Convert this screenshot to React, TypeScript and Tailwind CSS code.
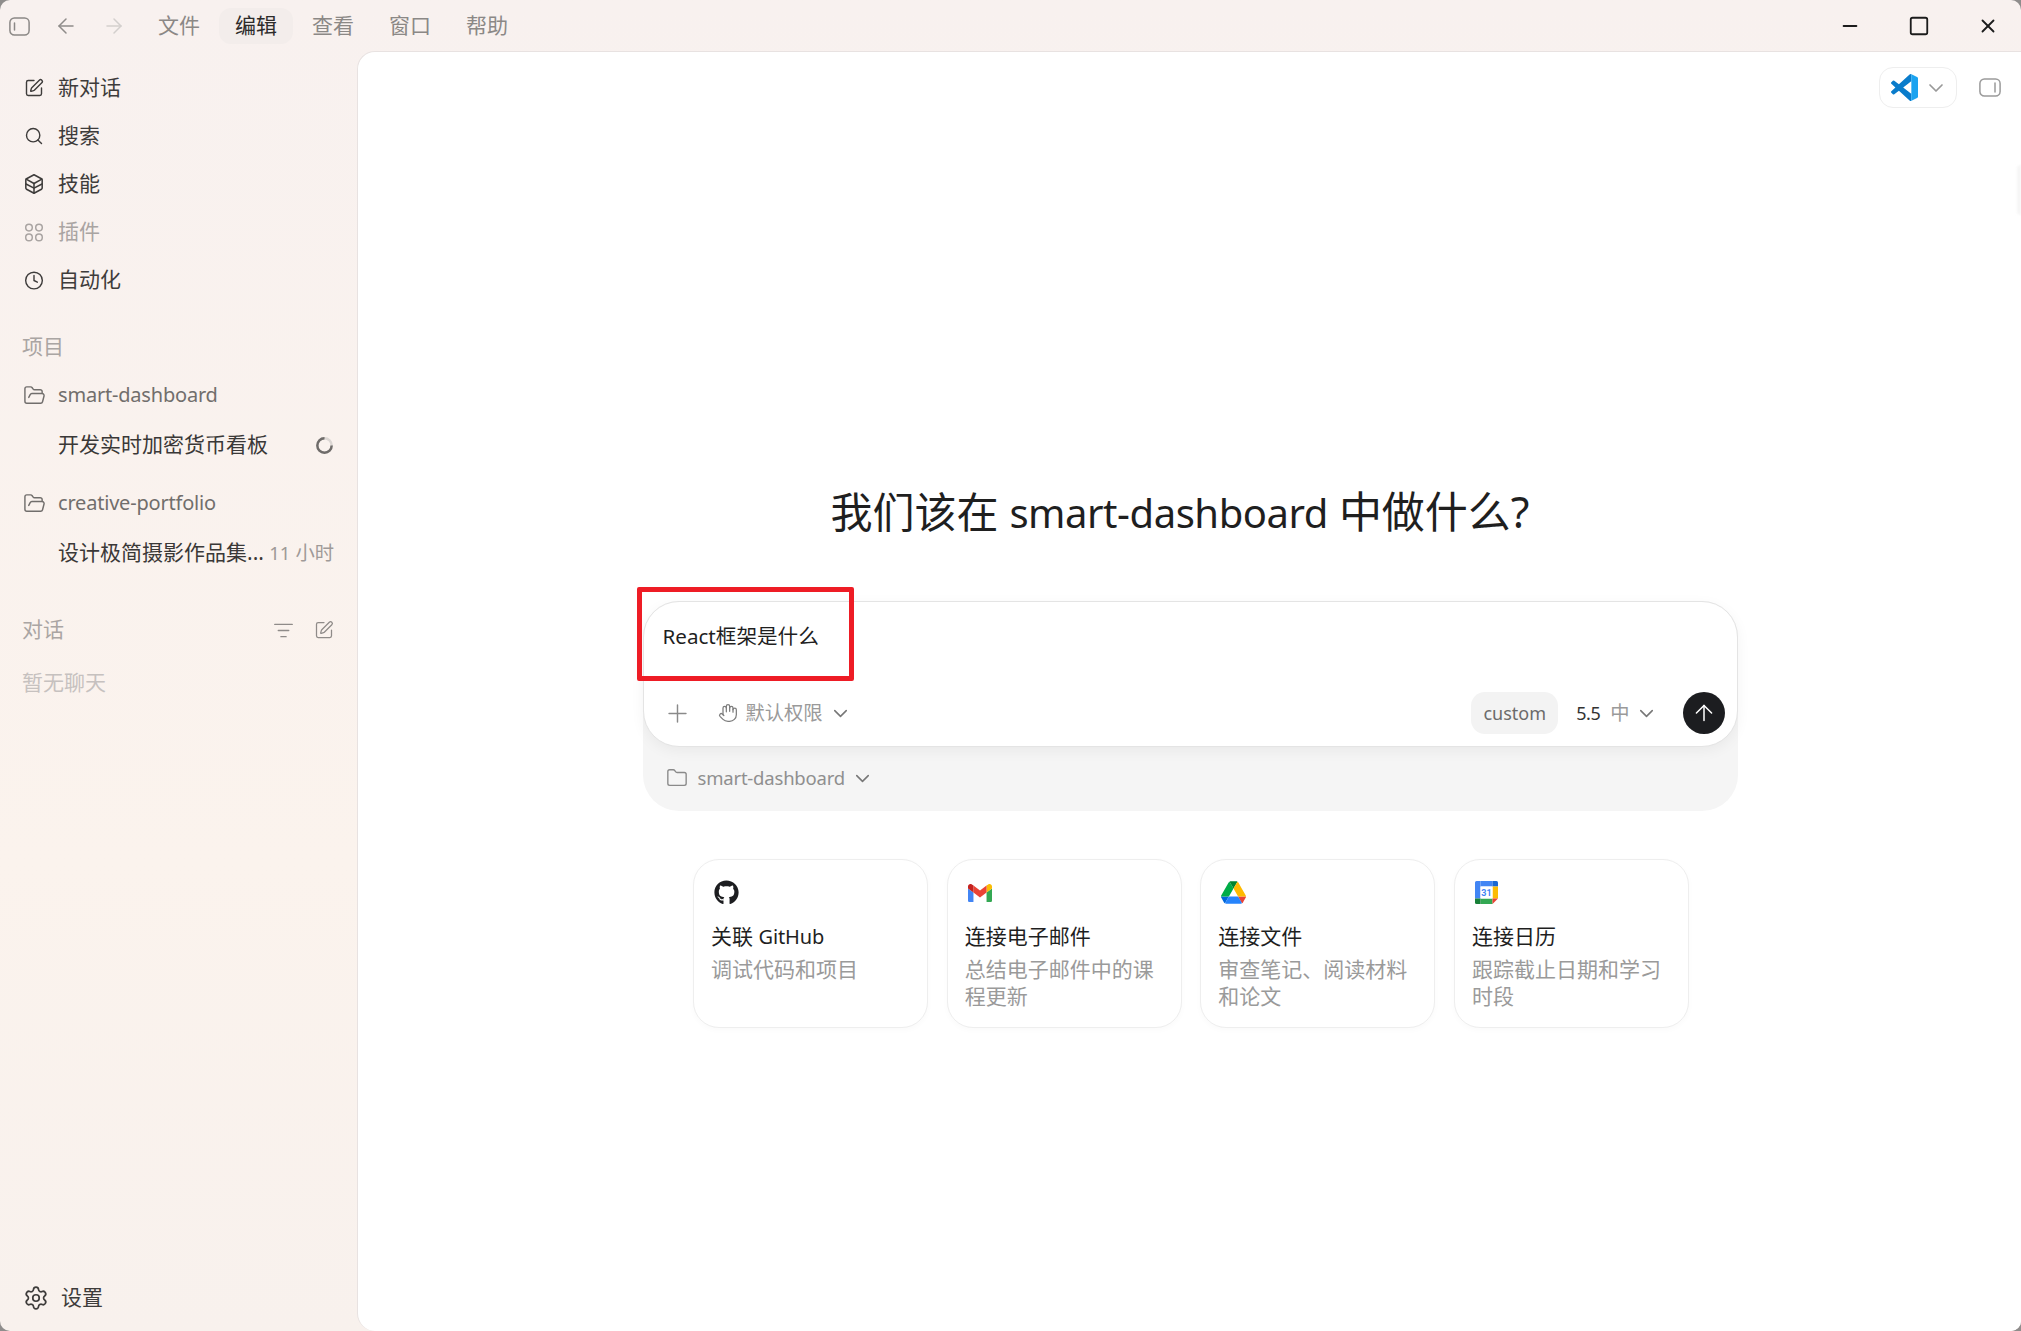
import { ArrowLeft, ArrowRight, ArrowUp, ChevronDown, Clock, Folder, FolderOpen, Hand, ListFilter, Minus, Plus, Search, Settings, Square, SquarePen, X } from "lucide-react";
import { FaGithub } from "react-icons/fa";
import type { ReactNode } from "react";

function SkillsIcon() {
  return (
    <svg width="22" height="24" viewBox="0 0 22 24" fill="none" stroke="currentColor" strokeWidth="1.7" strokeLinejoin="round" strokeLinecap="round">
      <path d="M11 1.8 19.2 6.2a1.5 1.5 0 0 1 .8 1.3v9a1.5 1.5 0 0 1-.8 1.3L11 22.2 2.8 17.8a1.5 1.5 0 0 1-.8-1.3v-9a1.5 1.5 0 0 1 .8-1.3Z" />
      <path d="M2.4 6.6 11 11.4 19.6 6.6" />
      <path d="M11 11.4v10.6" />
      <path d="M2.2 12 11 16.6 19.8 12" />
    </svg>
  );
}

function PluginsIcon() {
  return (
    <svg width="20" height="19" viewBox="0 0 20 19" fill="none" stroke="currentColor" strokeWidth="1.5">
      <circle cx="5" cy="4.6" r="3.3" />
      <circle cx="15" cy="4.6" r="3.3" />
      <circle cx="5" cy="14.4" r="3.3" />
      <circle cx="15" cy="14.4" r="3.3" />
    </svg>
  );
}

function Spinner() {
  return (
    <svg width="19" height="19" viewBox="0 0 18 18" fill="none" strokeWidth="2.3">
      <circle cx="9" cy="9" r="6.8" stroke="#dcd7d4" />
      <path d="M9 2.2A6.8 6.8 0 1 0 15.8 9" stroke="#6f6c6a" />
    </svg>
  );
}

function LeftToggle() {
  return (
    <svg width="21" height="19" viewBox="0 0 21 19" fill="none" stroke="currentColor" strokeWidth="1.5" strokeLinecap="round">
      <rect x="0.9" y="0.9" width="19.2" height="17.2" rx="4.5" />
      <path d="M5.5 6v7" />
    </svg>
  );
}

function RightToggle() {
  return (
    <svg width="22" height="19" viewBox="0 0 22 19" fill="none" stroke="currentColor" strokeWidth="1.5" strokeLinecap="round">
      <rect x="0.9" y="0.9" width="20.2" height="17.2" rx="4.5" />
      <path d="M16 5v9" />
    </svg>
  );
}

function VSCodeIcon() {
  const d = "M23.15 2.587L18.21.21a1.494 1.494 0 0 0-1.705.29l-9.46 8.63-4.12-3.128a.999.999 0 0 0-1.276.057L.327 7.261A1 1 0 0 0 .326 8.74L3.899 12 .326 15.26a1 1 0 0 0 .001 1.479L1.65 17.94a.999.999 0 0 0 1.276.057l4.12-3.128 9.46 8.63a1.492 1.492 0 0 0 1.704.29l4.942-2.377A1.5 1.5 0 0 0 24 20.06V3.939a1.5 1.5 0 0 0-.85-1.352zm-5.146 14.861L10.826 12l7.178-5.448v10.896z";
  return (
    <svg width="27" height="27" viewBox="0 0 24 24">
      <clipPath id="vsr"><rect x="18" y="0" width="6" height="24" /></clipPath>
      <clipPath id="vsl"><rect x="0" y="0" width="18" height="24" /></clipPath>
      <path d={d} fill="#0a7ccb" clipPath="url(#vsl)" />
      <path d={d} fill="#1ba3f0" clipPath="url(#vsr)" />
    </svg>
  );
}

function GmailIcon() {
  return (
    <svg width="24" height="24" viewBox="0 0 24 24">
      <path d="M1.6 21H5.45V11.6L0 7.5V19.4C0 20.3.7 21 1.6 21Z" fill="#4285F4" />
      <path d="M18.55 21H22.4C23.3 21 24 20.3 24 19.4V7.5L18.55 11.6Z" fill="#34A853" />
      <path d="M18.55 4.5V11.6L24 7.5V5.4C24 3.4 21.7 2.3 20.2 3.5Z" fill="#FBBC04" />
      <path d="M5.45 11.6V4.5L12 9.4L18.55 4.5V11.6L12 16.5Z" fill="#EA4335" />
      <path d="M0 5.4V7.5L5.45 11.6V4.5L3.9 3.5C2.3 2.3 0 3.4 0 5.4Z" fill="#C5221F" />
    </svg>
  );
}

function DriveIcon() {
  return (
    <svg width="25" height="23" viewBox="0 0 87.3 78">
      <path d="m6.6 66.85 3.85 6.65c.8 1.4 1.95 2.5 3.3 3.3l13.75-23.8h-27.5c0 1.55.4 3.1 1.2 4.5z" fill="#0066da" />
      <path d="m43.65 25-13.75-23.8c-1.35.8-2.5 1.9-3.3 3.3l-25.4 44a9.06 9.06 0 0 0 -1.2 4.5h27.5z" fill="#00ac47" />
      <path d="m73.55 76.8c1.35-.8 2.5-1.9 3.3-3.3l1.6-2.75 7.65-13.25c.8-1.4 1.2-2.95 1.2-4.5h-27.502l5.852 11.5z" fill="#ea4335" />
      <path d="m43.65 25 13.75-23.8c-1.35-.8-2.9-1.2-4.5-1.2h-18.5c-1.6 0-3.15.45-4.5 1.2z" fill="#00832d" />
      <path d="m59.8 53h-32.3l-13.75 23.8c1.35.8 2.9 1.2 4.5 1.2h50.8c1.6 0 3.15-.45 4.5-1.2z" fill="#2684fc" />
      <path d="m73.4 26.5-12.7-22c-.8-1.4-1.95-2.5-3.3-3.3l-13.75 23.8 16.15 28h27.45c0-1.55-.4-3.1-1.2-4.5z" fill="#ffba00" />
    </svg>
  );
}

function CalendarIcon() {
  return (
    <svg width="23" height="23" viewBox="0 0 23 23">
      <path d="M5.5 0H17.5V5.5H5.5Z" fill="#4285f4" />
      <path d="M1.5 0H5.5V17.5H0V1.5A1.5 1.5 0 0 1 1.5 0Z" fill="#4285f4" />
      <path d="M17.5 0H21.5A1.5 1.5 0 0 1 23 1.5V5.5H17.5Z" fill="#1967d2" />
      <path d="M17.5 5.5H23V17.5H17.5Z" fill="#fbbc04" />
      <path d="M5.5 17.5H17.5V23H5.5Z" fill="#34a853" />
      <path d="M0 17.5H5.5V23H1.5A1.5 1.5 0 0 1 0 21.5Z" fill="#188038" />
      <path d="M17.5 17.5H23L17.5 23Z" fill="#ea4335" />
      <rect x="5.5" y="5.5" width="12" height="12" fill="#fff" />
      <text x="11.5" y="15" textAnchor="middle" fontSize="9" fontWeight="700" fill="#4285f4" fontFamily="Roboto, sans-serif">31</text>
    </svg>
  );
}

function NavRow({ icon, label, muted }: { icon: ReactNode; label: string; muted?: boolean }) {
  return (
    <div className={`flex h-[48px] items-center gap-[14px] pl-[24px] ${muted ? "text-[#a9a4a2]" : "text-[#3e3c3b]"}`}>
      <span className="flex w-[20px] justify-center">{icon}</span>
      <span>{label}</span>
    </div>
  );
}

function ProjectRow({ name, children }: { name: string; children: ReactNode }) {
  return (
    <div className="flex flex-col">
      <div className="flex h-[48px] items-center gap-[12px] pl-[23px] text-[#716e6c]">
        <FolderOpen size={23} strokeWidth={1.5} />
        <span className="text-[20px] tracking-[-0.2px]">{name}</span>
      </div>
      <div className="flex h-[52px] items-center justify-between pl-[58px] pr-[23px] text-[#3a3837]">{children}</div>
    </div>
  );
}

function Card({ icon, title, sub }: { icon: ReactNode; title: ReactNode; sub: string }) {
  return (
    <div className="h-[169px] w-[235px] rounded-[26px] border border-[#eeeeee] bg-white px-[17px] pt-[20px] shadow-[0_2px_6px_rgba(0,0,0,0.025)]">
      <div className="ml-[3px] flex h-[25px] items-center">{icon}</div>
      <div className="mt-[18px] leading-[27px] text-[#1f1f1f]">{title}</div>
      <div className="mt-[6px] leading-[27px] text-[#9a9a9a]">{sub}</div>
    </div>
  );
}

export default function App() {
  return (
    <div className="h-[1331px] w-[2021px] overflow-hidden bg-[#8f8d8c] font-['Noto_Sans','Noto_Sans_CJK_SC',sans-serif] text-[21px]">
      <div className="flex h-full w-full flex-col overflow-hidden rounded-[10px] bg-gradient-to-b from-[#f8f1ef] via-[#fbf3ed] via-65% to-[#f8f1ed]">
        <header className="flex h-[51px] shrink-0 items-center pt-[1px]">
          <span className="ml-[9px] text-[#8b8886]"><LeftToggle /></span>
          <ArrowLeft size={24} strokeWidth={1.5} className="ml-[24px] text-[#8f8c8a]" />
          <ArrowRight size={24} strokeWidth={1.5} className="ml-[24px] text-[#d3cfcd]" />
          <nav className="ml-[16px] flex gap-[3px] text-[#8b8886]">
            <span className="flex h-[36px] w-[74px] items-center justify-center rounded-[12px]">文件</span>
            <span className="flex h-[36px] w-[74px] items-center justify-center rounded-[12px] bg-[#f3edeb] text-[#2d2b2a]">编辑</span>
            <span className="flex h-[36px] w-[74px] items-center justify-center rounded-[12px]">查看</span>
            <span className="flex h-[36px] w-[74px] items-center justify-center rounded-[12px]">窗口</span>
            <span className="flex h-[36px] w-[74px] items-center justify-center rounded-[12px]">帮助</span>
          </nav>
          <div className="ml-auto flex items-center gap-[47px] pr-[22px] text-[#1c1c1c]">
            <Minus size={22} strokeWidth={2} />
            <Square size={22} strokeWidth={2} />
            <X size={22} strokeWidth={2} />
          </div>
        </header>

        <div className="flex min-h-0 flex-1">
          <aside className="flex w-[357px] shrink-0 flex-col pt-[13px]">
            <NavRow icon={<SquarePen size={22} strokeWidth={1.7} />} label="新对话" />
            <NavRow icon={<Search size={22} strokeWidth={1.7} />} label="搜索" />
            <NavRow icon={<SkillsIcon />} label="技能" />
            <NavRow icon={<PluginsIcon />} label="插件" muted />
            <NavRow icon={<Clock size={23} strokeWidth={1.7} />} label="自动化" />

            <div className="mt-[19px] flex h-[48px] items-center pl-[22px] text-[#aaa5a3]">项目</div>
            <ProjectRow name="smart-dashboard">
              <span>开发实时加密货币看板</span>
              <Spinner />
            </ProjectRow>
            <div className="mt-[8px]">
              <ProjectRow name="creative-portfolio">
                <span className="whitespace-nowrap">设计极简摄影作品集...</span>
                <span className="whitespace-nowrap text-[19.3px] text-[#9f9a98]"><span className="text-[18.5px]">11</span> 小时</span>
              </ProjectRow>
            </div>

            <div className="mt-[27px] flex h-[48px] items-center justify-between pl-[22px] pr-[23px] text-[#aaa5a3]">
              <span>对话</span>
              <div className="flex items-center gap-[20px] text-[#8f8b89]">
                <ListFilter size={21} strokeWidth={1.5} />
                <SquarePen size={20} strokeWidth={1.5} />
              </div>
            </div>
            <div className="mt-[5px] flex h-[48px] items-center pl-[22px] text-[#c6c1bf]">暂无聊天</div>

            <div className="mt-auto mb-[9px] flex h-[48px] items-center gap-[12px] pl-[23px] text-[#3e3c3b]">
              <Settings size={26} strokeWidth={1.6} />
              <span>设置</span>
            </div>
          </aside>

          <main className="relative flex min-w-0 flex-1 flex-col items-center overflow-hidden rounded-tl-[18px] rounded-bl-[18px] border-t border-l border-[#e8e2e1] bg-white">
            <div className="flex h-[56px] w-full items-end justify-end gap-[22px] pr-[20px]">
              <div className="flex h-[41px] w-[78px] items-center gap-[6px] rounded-[14px] border border-[#eeeeee] pl-[11px]">
                <VSCodeIcon />
                <ChevronDown size={24} strokeWidth={1.7} className="text-[#999999]" />
              </div>
              <span className="mb-[11px] text-[#9a9a9a]"><RightToggle /></span>
            </div>

            <h1 className="mt-[376px] h-[56px] pr-[19px] text-[42px] leading-[56px] font-normal text-[#1f1f1f]">我们该在 <span className="text-[40px] tracking-[-0.45px]">smart-dashboard</span> <span className="text-[43px]">中做什么?</span></h1>

            <div className="relative mt-[61px] ml-[1px] flex w-[1095px] flex-col rounded-[36px] bg-[#f5f5f5]">
              <div className="flex h-[146px] flex-col rounded-[36px] border border-[#e4e4e4] bg-white px-[12px] shadow-[0_4px_14px_rgba(0,0,0,0.05)]">
                <div className="pt-[20px] pl-[7px] text-[20.6px] leading-[28px] text-[#1f1f1f]">React框架是什么</div>
                <div className="mt-auto mb-[12px] flex items-center text-[19.3px]">
                  <Plus size={29} strokeWidth={1.2} className="ml-[7px] text-[#8a8a8a]" />
                  <Hand size={20} strokeWidth={1.5} className="ml-[26px] text-[#7d7d7d]" />
                  <span className="ml-[8px] text-[#9a9a9a]">默认权限</span>
                  <ChevronDown size={23} strokeWidth={1.6} className="ml-[6px] text-[#777777]" />
                  <span className="ml-auto flex h-[42px] w-[87px] items-center justify-center rounded-[14px] bg-[#f3f3f3] text-[18px] text-[#6b6b6b]">custom</span>
                  <span className="ml-[18px] text-[18px] tracking-[-0.5px] text-[#333333]">5.5</span>
                  <span className="ml-[10px] text-[#9a9a9a]">中</span>
                  <ChevronDown size={23} strokeWidth={1.6} className="ml-[5px] text-[#777777]" />
                  <span className="ml-[25px] flex h-[42px] w-[42px] items-center justify-center rounded-full bg-[#1c1d20] text-white">
                    <ArrowUp size={26} strokeWidth={1.4} />
                  </span>
                </div>
              </div>
              <div className="flex h-[64px] items-center pb-[2px] pl-[23px] text-[18.5px] tracking-[-0.2px] text-[#8f8f8f]">
                <Folder size={22} strokeWidth={1.5} className="text-[#8a8a8a]" />
                <span className="ml-[10px]">smart-dashboard</span>
                <ChevronDown size={23} strokeWidth={1.6} className="ml-[6px] text-[#777777]" />
              </div>
              <div className="absolute top-[-14px] left-[-6px] h-[94px] w-[217px] rounded-[2px] border-[5px] border-[#ee1c25]" />
            </div>

            <div className="mt-[48px] ml-[3px] flex w-[996px] justify-between">
              <Card icon={<FaGithub size={25} className="text-[#1c1d20]" />} title={<>关联 <span className="text-[20px] tracking-[-0.1px]">GitHub</span></>} sub="调试代码和项目" />
              <Card icon={<GmailIcon />} title="连接电子邮件" sub="总结电子邮件中的课程更新" />
              <Card icon={<DriveIcon />} title="连接文件" sub="审查笔记、阅读材料和论文" />
              <Card icon={<CalendarIcon />} title="连接日历" sub="跟踪截止日期和学习时段" />
            </div>

            <div className="absolute top-[113px] right-0 h-[50px] w-[4px] rounded-l-full bg-[#f6f6f6] blur-[1px]" />
          </main>
        </div>
      </div>
    </div>
  );
}
